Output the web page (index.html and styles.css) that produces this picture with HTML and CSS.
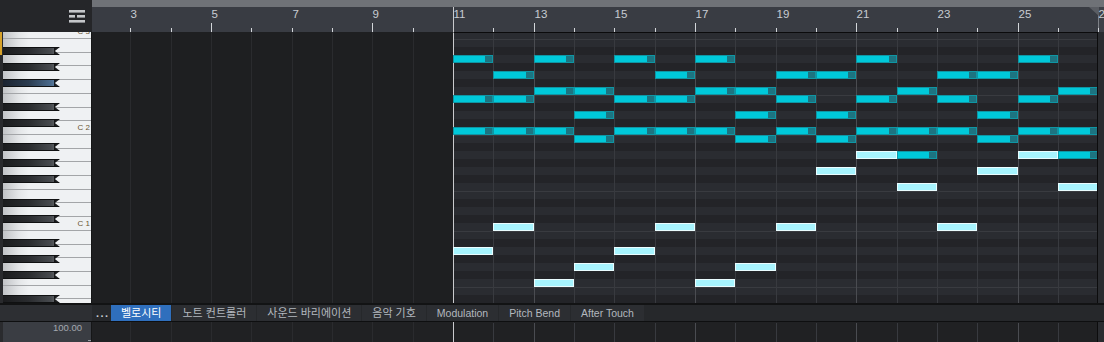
FILE: index.html
```html
<!DOCTYPE html>
<html lang="ko">
<head>
  <meta charset="UTF-8" />
  <meta name="viewport" content="width=device-width, initial-scale=1.0"/>
  <title>Piano Roll</title>
  <link rel="stylesheet" href="styles.css">
</head>
<body>
  <div class="head">
    <div class="corner">
      <svg class="menu-icon" width="16" height="13" viewBox="0 0 16 13">
        <rect x="0" y="0" width="16" height="2.6"/>
        <rect x="0" y="5" width="6" height="2.6"/>
        <rect x="8" y="5" width="8" height="2.6"/>
        <rect x="0" y="10" width="16" height="2.6"/>
      </svg>
    </div>
    <div class="ruler" id="ruler">
      <div class="ruler-end"></div>
      <div class="playhead"></div>
    </div>
  </div>

  <div class="main">
    <div class="piano">
      <div class="keys" id="keys"></div>
      <div class="marker"></div>
    </div>
    <div class="grid" id="grid">
      <div class="idle"></div>
      <div class="active" id="rows"></div>
    </div>
    <div class="edge"></div>
  </div>

  <div class="tabs-row">
    <div class="tabs-side"></div>
    <div class="more">...</div>
    <div class="tab ko on">벨로시티</div>
    <div class="tab ko">노트 컨트롤러</div>
    <div class="tab ko">사운드 바리에이션</div>
    <div class="tab ko">음악 기호</div>
    <div class="tab">Modulation</div>
    <div class="tab">Pitch Bend</div>
    <div class="tab">After Touch</div>
  </div>

  <div class="lane-row">
    <div class="lane-head">100.00</div>
    <div class="lane" id="lane">
      <div class="playhead"></div>
    </div>
    <div class="edge"></div>
  </div>

  <script>
    // one bar is 121/3 px, bar 11 sits on x = 453
    const BAR = 121 / 3;
    const LEFT = 92;
    const barX = n => Math.round(453 + (n - 11) * BAR);
    const isBlack = k => [2, 4, 6, 9, 11].includes(k % 12);

    // ruler
    const ruler = document.getElementById('ruler');
    for (let n = 2; n <= 27; n++) {
      const x = barX(n) - LEFT;
      if (n !== 11) {
        const t = document.createElement('div');
        t.className = 'tick' + (n % 4 === 1 ? ' long' : '');
        t.style.left = x + 'px';
        ruler.appendChild(t);
      }
      if (n % 2 === 1) {
        const num = document.createElement('div');
        num.className = 'bar-num';
        num.textContent = n;
        num.style.left = (x + 0.5) + 'px';
        ruler.appendChild(num);
      }
    }

    // keyboard, row k = C3 minus k semitones
    const keys = document.getElementById('keys');
    for (let j = 0; j < 21; j++) {
      const w = document.createElement('div');
      w.className = 'wkey';
      keys.appendChild(w);
    }
    for (let k = 0; k < 34; k++) {
      if (isBlack(k)) {
        const b = document.createElement('div');
        b.className = 'bkey' + (k === 6 ? ' hot' : '');
        b.style.top = (8 * k - 1) + 'px';
        keys.appendChild(b);
      }
      if (k % 12 === 0) {
        const label = document.createElement('div');
        label.className = 'oct';
        label.textContent = 'C ' + (3 - k / 12);
        label.style.top = (8 * k - 4) + 'px';
        keys.appendChild(label);
      }
    }

    // note rows
    const rows = document.getElementById('rows');
    for (let k = 0; k < 34; k++) {
      const r = document.createElement('div');
      r.className = 'row' + (isBlack(k) ? ' dark' : '');
      if (k % 12 === 1 || k % 12 === 8) r.classList.add('line');
      rows.appendChild(r);
    }

    // bar lines
    const grid = document.getElementById('grid');
    const lane = document.getElementById('lane');
    for (let n = 2; n <= 27; n++) {
      if (n === 11) continue;
      const cls = 'vline' + (n < 11 ? ' dim' : n % 4 === 1 ? ' strong' : '');
      for (const host of [grid, lane]) {
        const l = document.createElement('div');
        l.className = cls;
        l.style.left = (barX(n) - LEFT) + 'px';
        host.appendChild(l);
      }
    }

    // [row, bars]
    const notes = [
      [3, [11, 13, 15, 17, 21, 25]],
      [5, [12, 16, 19, 20, 23, 24]],
      [7, [13, 14, 17, 18, 22, 26]],
      [8, [11, 12, 15, 16, 19, 21, 23, 25]],
      [10, [14, 18, 20, 24]],
      [12, [11, 12, 13, 15, 16, 17, 19, 21, 22, 23, 25, 26]],
      [13, [14, 18, 20, 24]],
      [15, [22, 26]]
    ];
    const softNotes = [
      [15, [21, 25]],
      [17, [20, 24]],
      [19, [22, 26]],
      [24, [12, 16, 19, 23]],
      [27, [11, 15]],
      [29, [14, 18]],
      [31, [13, 17]]
    ];

    function addNotes(list, cls) {
      for (const [k, bars] of list) {
        for (const n of bars) {
          const el = document.createElement('div');
          el.className = cls;
          el.style.left = (barX(n) - LEFT) + 'px';
          el.style.top = (8 * k - 1) + 'px';
          el.style.width = (barX(n + 1) - barX(n)) + 'px';
          grid.appendChild(el);
        }
      }
    }
    addNotes(notes, 'note');
    addNotes(softNotes, 'note soft');
  </script>
</body>
</html>
```

FILE: styles.css
```css
html, body {
  margin: 0;
  overflow: hidden;
}
body {
  width: 1104px;
  height: 342px;
  display: flex;
  flex-direction: column;
  background: #1e1f21;
  font-family: "Liberation Sans", "Noto Sans CJK KR", sans-serif;
  color: #b5bac1;
}

/* top: corner + ruler */
.head {
  display: flex;
  flex: none;
  height: 32px;
}
.corner {
  width: 92px;
  box-sizing: border-box;
  padding-right: 7px;
  background: #252629;
  display: flex;
  align-items: center;
  justify-content: flex-end;
}
.menu-icon {
  fill: #c4c6c9;
}
.ruler {
  flex: 1;
  position: relative;
  overflow: hidden;
  background: #393c43;
  border-top: 7px solid #6f7277;
}
.tick {
  position: absolute;
  bottom: 0;
  width: 1px;
  height: 4px;
  background: #d3d6da;
}
.tick.long {
  height: 9px;
}
.bar-num {
  position: absolute;
  top: 1px;
  font-size: 11.5px;
  line-height: 12px;
  color: #c8ccd2;
}
.playhead {
  position: absolute;
  left: 361px;
  top: 0;
  bottom: 0;
  width: 1px;
  background: #c9cacd;
}
.ruler .playhead {
  top: -7px;
}
.ruler-end {
  position: absolute;
  right: 0;
  top: 0;
  bottom: 0;
  width: 5px;
  border-left: 1px solid #7d8086;
  background: #3e4148;
}
.ruler-end::before {
  content: "";
  position: absolute;
  right: 100%;
  top: 0;
  border-top: 9px solid #5a5d63;
  border-left: 10px solid transparent;
}

/* keyboard + note grid */
.main {
  display: flex;
  flex: none;
  height: 271px;
  border-bottom: 2px solid #121314;
}
.piano {
  position: relative;
  width: 92px;
  box-sizing: border-box;
  border-left: 3px solid #292a2d;
  border-right: 1px solid #151617;
}
.keys {
  position: relative;
  height: 100%;
  overflow: hidden;
}
.wkey {
  height: 13.714px;
  box-sizing: border-box;
  border-bottom: 1px solid #a3a5a8;
  background: linear-gradient(90deg, #c1c3c6 0, #e4e6e8 16px, #eff1f3 26px);
}
.wkey:first-child {
  height: 7px;
}
.bkey {
  position: absolute;
  left: 0;
  width: 57px;
  height: 8px;
  box-sizing: border-box;
  border-top: 1px solid #101112;
  border-bottom: 1px solid #101112;
  background: linear-gradient(90deg, #1b1c1e 0, #2a2c2f 45%, #474a4e 84%, #55585c 89%, #151617 90%, #2d2f32 100%);
  clip-path: polygon(0 0, 100% 0, 91% 50%, 100% 100%, 0 100%);
}
.bkey.hot {
  background: linear-gradient(90deg, #1b2330 0, #2b3c50 45%, #4a6a8c 84%, #56779a 89%, #151a20 90%, #2d3642 100%);
}
.oct {
  position: absolute;
  right: 1px;
  font-size: 8px;
  line-height: 8px;
  color: #6b5633;
}
.marker {
  position: absolute;
  left: -3px;
  top: 0;
  width: 2px;
  height: 23px;
  background: #d7a22a;
}
.grid {
  flex: 1;
  display: flex;
  position: relative;
  overflow: hidden;
  border-right: 1px solid #0c0c0d;
}
.idle {
  flex: none;
  width: 361px;
  background: #1e1f21;
}
.active {
  flex: 1;
  display: flex;
  flex-direction: column;
  border-left: 1px solid #c9cacd;
  border-top: 1px solid #0b0b0c;
}
.row {
  flex: none;
  height: 8px;
  background: #2a2c31;
}
.row:first-child {
  height: 6px;
}
.row.dark {
  background: #232428;
}
.row.line {
  box-shadow: inset 0 1px 0 #393b40;
}
.vline {
  position: absolute;
  top: 1px;
  bottom: 0;
  width: 1px;
  background: #383a3f;
}
.vline.dim {
  top: 0;
  background: #2a2b2e;
}
.vline.strong {
  background: #4a4c51;
}
.note {
  position: absolute;
  height: 8px;
  box-sizing: border-box;
  border: 1px solid #0f96a4;
  background: #00c9da;
}
.note::after {
  content: "";
  position: absolute;
  right: 0;
  top: 0;
  bottom: 0;
  width: 7px;
  background: #1d7481;
}
.note.soft {
  background: #a7f4fe;
  border-color: #eafdff;
}
.note.soft::after {
  display: none;
}
.edge {
  flex: none;
  width: 6px;
  background: #2a2c30;
}

/* controller tabs */
.tabs-row {
  display: flex;
  flex: none;
  height: 16px;
  border-bottom: 1px solid #0e0f10;
  background: #26282b;
  font-size: 10.5px;
  line-height: 16px;
}
.tabs-side {
  flex: none;
  width: 92px;
  background: #2d2f33;
}
.more {
  flex: none;
  width: 19px;
  padding-left: 4px;
  box-sizing: border-box;
  font-size: 11px;
  font-weight: bold;
  letter-spacing: 1.5px;
  color: #c6cad0;
}
.tab {
  flex: none;
  padding: 0 10px;
  margin-right: 1px;
  background: #2c2e32;
  color: #b3b8bf;
}
.tab.ko {
  font-size: 11px;
}
.tab.on {
  background: #2f6fbd;
  color: #ffffff;
}

/* velocity lane */
.lane-row {
  display: flex;
  flex: 1;
}
.lane-head {
  position: relative;
  width: 92px;
  box-sizing: border-box;
  border-left: 3px solid #2a2b2e;
  border-right: 1px solid #151617;
  background: #3a3d43;
  padding-right: 9px;
  text-align: right;
  font-size: 9.5px;
  line-height: 11px;
  color: #a3a8af;
}
.lane-head::after {
  content: "";
  position: absolute;
  right: 0;
  bottom: 1px;
  width: 3px;
  height: 1px;
  background: #9a9ea4;
}
.lane {
  flex: 1;
  position: relative;
  overflow: hidden;
  background: #202123;
  border-right: 1px solid #0c0c0d;
}
```
